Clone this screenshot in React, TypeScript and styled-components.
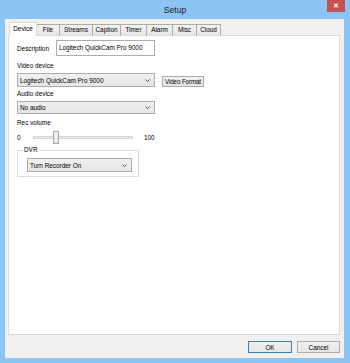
import React from 'react'
import styled, { createGlobalStyle } from 'styled-components'

const GlobalStyle = createGlobalStyle`
  html, body {
    margin: 0;
    padding: 0;
    background: #8cc4f4;
  }
  body {
    font-family: 'Liberation Sans', Arial, sans-serif;
    font-size: 6.4px;
    color: #000;
  }
`

const Window = styled.div`
  width: 350px;
  height: 363px;
  display: flex;
  flex-direction: column;
  background: #8cc4f4;
  box-sizing: border-box;
  padding: 0 6px 5px 5px;
`

const TitleBar = styled.div`
  height: 19px;
  display: grid;
  grid-template-columns: 1fr auto 1fr;
  align-items: start;
  margin-right: -1px;
`

const Title = styled.div`
  grid-column: 2;
  font-size: 8.6px;
  line-height: 20px;
  color: #1a1a1a;
`

const CloseButton = styled.div`
  grid-column: 3;
  justify-self: end;
  width: 18px;
  height: 12px;
  background: #c75050;
  color: #fff;
  font-size: 7px;
  font-weight: bold;
  line-height: 12px;
  text-align: center;
`

const Client = styled.div`
  flex: 1;
  display: flex;
  flex-direction: column;
  background: #f0f0f0;
  padding: 3px 4px 0 3px;
`

const TabRow = styled.div`
  display: flex;
  align-items: flex-end;
  height: 14px;
  margin: 0 0 -1px 1px;
  position: relative;
  z-index: 1;
`

const Tab = styled.div<{ $w: number; $active?: boolean }>`
  width: ${({ $w }) => $w}px;
  height: ${({ $active }) => ($active ? 14 : 12)}px;
  box-sizing: border-box;
  margin-left: -1px;
  border: 1px solid ${({ $active }) => ($active ? '#d9d9d9' : '#acacac')};
  border-bottom: ${({ $active }) => ($active ? 'none' : '1px solid #d9d9d9')};
  background: ${({ $active }) => ($active ? '#fff' : 'linear-gradient(#f2f2f2, #e6e6e6)')};
  text-align: center;
  line-height: ${({ $active }) => ($active ? 12 : 10)}px;
  position: relative;
  z-index: ${({ $active }) => ($active ? 2 : 1)};
  &:first-child {
    margin-left: 0;
  }
`

const Panel = styled.div`
  height: 300px;
  box-sizing: border-box;
  background: #fff;
  border: 1px solid #d9d9d9;
  display: flex;
  flex-direction: column;
  align-items: flex-start;
  padding: 4px 0 0 8px;
`

const FieldRow = styled.div`
  display: flex;
  align-items: center;
`

const Label = styled.div<{ $top?: number }>`
  height: 9px;
  line-height: 9px;
  margin-top: ${({ $top }) => $top ?? 0}px;
`

const InlineLabel = styled.div`
  width: 39px;
`

const TextBox = styled.div`
  width: 99px;
  height: 16px;
  box-sizing: border-box;
  border: 1px solid #abadb3;
  padding-left: 2px;
  line-height: 14px;
`

const ComboRow = styled.div`
  display: flex;
  align-items: flex-end;
  margin-top: 3px;
`

const Combo = styled.div<{ $w: number; $h: number; $top?: number }>`
  width: ${({ $w }) => $w}px;
  height: ${({ $h }) => $h}px;
  margin-top: ${({ $top }) => $top ?? 0}px;
  box-sizing: border-box;
  border: 1px solid #acacac;
  background: linear-gradient(#f0f0f0, #e5e5e5);
  display: flex;
  align-items: center;
  justify-content: space-between;
  padding: 0 4px 0 2px;
`

const PushButton = styled.div<{ $w: number; $h: number; $default?: boolean }>`
  width: ${({ $w }) => $w}px;
  height: ${({ $h }) => $h}px;
  box-sizing: border-box;
  border: 1px solid ${({ $default }) => ($default ? '#3c7fb1' : '#acacac')};
  background: linear-gradient(#f0f0f0, #e5e5e5);
  display: flex;
  align-items: center;
  justify-content: center;
  white-space: nowrap;
`

const SideButton = styled(PushButton)`
  margin-left: 7px;
  font-size: 6.3px;
  letter-spacing: -0.15px;
  padding: 0;
`

const SliderRow = styled.div`
  display: flex;
  align-items: center;
  height: 13px;
  margin-top: 4px;
`

const SliderEnd = styled.div<{ $w: number }>`
  width: ${({ $w }) => $w}px;
`

const Track = styled.div`
  width: 100px;
  height: 3px;
  box-sizing: border-box;
  border: 1px solid #d6d6d6;
  background: #e7eaea;
  position: relative;
  margin-right: 11px;
`

const Thumb = styled.div`
  position: absolute;
  top: -6px;
  width: 6px;
  height: 13px;
  box-sizing: border-box;
  border: 1px solid #acacac;
  background: linear-gradient(#f0f0f0, #e5e5e5);
`

const Group = styled.fieldset`
  width: 122px;
  box-sizing: border-box;
  margin: 2px 0 0;
  border: 1px solid #dcdcdc;
  padding: 0 6px 4px 9px;
  min-width: 0;
`

const GroupLegend = styled.legend`
  padding: 0 1px;
  margin-left: -4px;
  line-height: 8px;
`

const GroupBody = styled.div`
  padding-top: 4px;
`

const Footer = styled.div`
  display: flex;
  justify-content: flex-end;
  gap: 5px;
  padding: 6px 0 0;
`

function Chevron() {
  return (
    <svg width="5" height="3" viewBox="0 0 5 3">
      <path d="M0.5 0.5 L2.5 2.5 L4.5 0.5" fill="none" stroke="#444" strokeWidth="0.9" />
    </svg>
  )
}

const TABS: [string, number][] = [
  ['Device', 28],
  ['File', 24],
  ['Streams', 34],
  ['Caption', 29],
  ['Timer', 27],
  ['Alarm', 27],
  ['Misc', 25],
  ['Cloud', 25]
]

export default function App() {
  const volume = 19

  return (
    <Window>
      <GlobalStyle />
      <TitleBar>
        <Title>Setup</Title>
        <CloseButton>✕</CloseButton>
      </TitleBar>
      <Client>
        <TabRow>
          {TABS.map(([name, w]) => (
            <Tab key={name} $w={w} $active={name === 'Device'}>
              {name}
            </Tab>
          ))}
        </TabRow>
        <Panel>
          <FieldRow>
            <InlineLabel>Description</InlineLabel>
            <TextBox>Logitech QuickCam Pro 9000</TextBox>
          </FieldRow>
          <Label $top={5}>Video device</Label>
          <ComboRow>
            <Combo $w={138} $h={14}>
              Logitech QuickCam Pro 9000
              <Chevron />
            </Combo>
            <SideButton $w={42} $h={11}>Video Format</SideButton>
          </ComboRow>
          <Label $top={2}>Audio device</Label>
          <Combo $w={138} $h={13} $top={3}>
            No audio
            <Chevron />
          </Combo>
          <Label $top={4}>Rec volume</Label>
          <SliderRow>
            <SliderEnd $w={16}>0</SliderEnd>
            <Track>
              <Thumb style={{ left: `${volume}px` }} />
            </Track>
            <SliderEnd $w={12}>100</SliderEnd>
          </SliderRow>
          <Group>
            <GroupLegend>DVR</GroupLegend>
            <GroupBody>
              <Combo $w={105} $h={14}>
                Turn Recorder On
                <Chevron />
              </Combo>
            </GroupBody>
          </Group>
        </Panel>
        <Footer>
          <PushButton $w={44} $h={12} $default>OK</PushButton>
          <PushButton $w={43} $h={12}>Cancel</PushButton>
        </Footer>
      </Client>
    </Window>
  )
}
